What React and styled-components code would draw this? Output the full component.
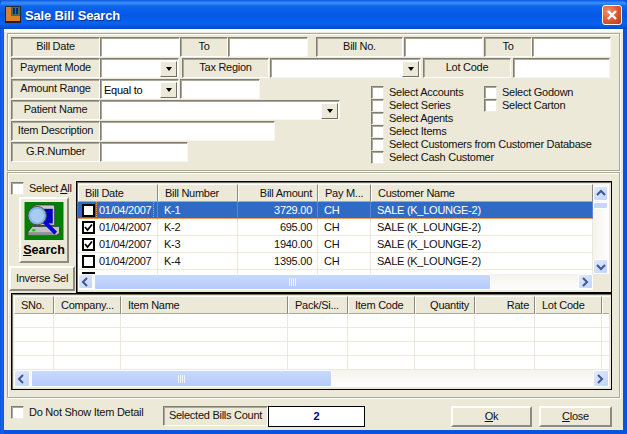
import React from "react";
import styled, { createGlobalStyle } from "styled-components";

const GlobalStyle = createGlobalStyle`
  html, body { margin: 0; padding: 0; background: #0a4fd8; }
  body { font-family: "Liberation Sans", Arial, sans-serif; font-size: 11px; letter-spacing: -0.26px; color: #000; }
`;

const Window = styled.div`
  width: 627px;
  height: 434px;
  display: flex;
  flex-direction: column;
  overflow: hidden;
  background: linear-gradient(90deg, #0a52e0 0, #1a66ee 2px, #0a52e0 4px, #0a52e0 100%);
`;

const TitleBar = styled.div`
  height: 29px;
  flex: none;
  display: flex;
  align-items: center;
  padding: 0 5px;
  border-radius: 6px 6px 0 0;
  background: linear-gradient(180deg, #0a58e0 0, #3a92f8 3px, #0f64ec 6px, #0458e6 15px, #0a62ee 24px, #0348c8 29px);
`;

const TitleText = styled.div`
  flex: 1;
  margin-left: 4px;
  padding-top: 2px;
  color: #fff;
  font-size: 13px;
  font-weight: bold;
  letter-spacing: -0.15px;
  text-shadow: 1px 1px 0 #0a2f90;
`;

const CloseButton = styled.div`
  width: 20px;
  height: 20px;
  box-sizing: border-box;
  border: 1px solid #fff;
  border-radius: 3px;
  display: flex;
  align-items: center;
  justify-content: center;
  background: radial-gradient(circle at 30% 30%, #ee9070, #d8532a 60%, #b83c14);
`;

const Body = styled.div`
  flex: 1;
  margin: 0 4px 4px 4px;
  padding: 1px 3px 0 3px;
  border-top: 3px solid #fff;
  background: #ece9d8;
  display: flex;
  flex-direction: column;
  gap: 1px;
`;

const Panel = styled.div`
  box-sizing: border-box;
  border: 1px solid #aca899;
  box-shadow: inset 1px 1px 0 #fff, 1px 1px 0 #fff;
  padding: ${(p) => p.$pad};
  height: ${(p) => p.$h}px;
  flex: none;
`;

const Row = styled.div`
  display: flex;
  height: 20px;
  margin-bottom: 1px;
`;

const Label = styled.div`
  box-sizing: border-box;
  width: ${(p) => p.$w}px;
  margin-left: ${(p) => p.$ml || 0}px;
  height: 20px;
  line-height: 16px;
  text-align: center;
  white-space: nowrap;
  overflow: hidden;
  border: 1px solid;
  border-color: #807d72 #fff #fff #807d72;
  box-shadow: inset 1px 1px 0 #aca899;
  background: #ece9d8;
  color: #111;
`;

const Field = styled.div`
  box-sizing: border-box;
  width: ${(p) => p.$w}px;
  margin-left: ${(p) => p.$ml || 0}px;
  height: 20px;
  display: flex;
  align-items: center;
  justify-content: space-between;
  padding: 1px 1px 0 3px;
  background: #fff;
  border: 1px solid;
  border-color: #807d72 #f8f7f0 #f8f7f0 #807d72;
  box-shadow: inset 1px 1px 0 #aca899;
`;

const DropButton = styled.div`
  box-sizing: border-box;
  width: 17px;
  height: 16px;
  background: #ece9d8;
  border: 1px solid;
  border-color: #fff #716f64 #716f64 #fff;
  display: flex;
  align-items: center;
  justify-content: center;
  &::after {
    content: "";
    border: 3px solid transparent;
    border-top: 4px solid #000;
    border-bottom: 0;
  }
`;

const LowerFilters = styled.div`
  display: flex;
`;

const FilterColumn = styled.div`
  width: 360px;
  flex: none;
`;

const CheckColumns = styled.div`
  display: flex;
  padding-top: 7px;
`;

const CheckList = styled.div`
  width: ${(p) => p.$w}px;
  display: flex;
  flex-direction: column;
`;

const CheckRow = styled.label`
  height: 13px;
  display: flex;
  align-items: center;
  gap: 5px;
  white-space: nowrap;
  color: #111;
  line-height: 13px;
`;

const Box = styled.span`
  box-sizing: border-box;
  width: 13px;
  height: 13px;
  flex: none;
  background: #fff;
  border: 1px solid;
  border-color: #807d72 #f0eee2 #f0eee2 #807d72;
  box-shadow: inset 1px 1px 0 #aca899;
`;

const ResultsTop = styled.div`
  display: flex;
`;

const SideColumn = styled.div`
  width: 66px;
  margin-right: 1px;
  flex: none;
  display: flex;
  flex-direction: column;
`;

const SelectAll = styled(CheckRow)`
  margin-left: 2px;
  height: 14px;
  margin-bottom: 2px;
`;

const SearchButton = styled.div`
  box-sizing: border-box;
  width: 50px;
  height: 66px;
  margin-left: 10px;
  padding-top: 3px;
  display: flex;
  flex-direction: column;
  align-items: center;
  background: #ece9d8;
  border: 2px solid;
  border-color: #fff #8d8b80 #8d8b80 #fff;
  font-weight: bold;
  font-size: 12.5px;
  letter-spacing: 0;
  line-height: 21px;
`;

const PushButton = styled.div`
  box-sizing: border-box;
  width: ${(p) => p.$w}px;
  height: ${(p) => p.$h || 20}px;
  margin-left: ${(p) => p.$ml || 0}px;
  margin-top: ${(p) => p.$mt || 0}px;
  padding-bottom: 1px;
  display: flex;
  align-items: center;
  justify-content: center;
  background: #ece9d8;
  border: 2px solid;
  border-color: #fff #8d8b80 #8d8b80 #fff;
  color: #111;
`;

const GridFrame = styled.div`
  box-sizing: border-box;
  width: ${(p) => p.$w}px;
  height: ${(p) => p.$h}px;
  margin-left: ${(p) => p.$ml || 0}px;
  padding: 2px 2px 2px ${(p) => p.$pl}px;
  border: 1px solid #000;
  box-shadow: inset 1px 1px 0 #716f64;
  background: #ece9d8;
  display: grid;
  grid-template-columns: ${(p) => p.$cols};
  grid-template-rows: ${(p) => p.$rows};
`;

const GridTable = styled.div`
  overflow: hidden;
  background: #fff;
  min-width: 0;
  min-height: 0;
`;

const GridRow = styled.div`
  display: flex;
  height: ${(p) => p.$h}px;
  background: ${(p) => (p.$sel ? "#316ac5" : "#fff")};
  color: ${(p) => (p.$sel ? "#fff" : "#111")};
`;

const HeadCell = styled.div`
  box-sizing: border-box;
  flex: none;
  width: ${(p) => p.$w}px;
  height: 18px;
  padding: 0 ${(p) => (p.$right ? 5 : 6)}px;
  line-height: 17px;
  text-align: ${(p) => (p.$right ? "right" : "left")};
  white-space: nowrap;
  overflow: hidden;
  background: #ece9d8;
  border: 1px solid;
  border-color: #fff #8d8b80 #aca899 #fff;
`;

const Cell = styled.div`
  box-sizing: border-box;
  flex: none;
  display: flex;
  align-items: center;
  justify-content: ${(p) => (p.$right ? "flex-end" : "flex-start")};
  width: ${(p) => p.$w}px;
  height: 100%;
  padding: 0 5px 0 6px;
  white-space: nowrap;
  border-right: 1px solid #ece9d8;
  border-bottom: 1px solid ${(p) => (p.$sel ? "#e8a05a" : "#ece9d8")};
  ${(p) => p.$sel && "border-right-color: #5f86d0;"}
`;

const DateCell = styled(Cell)`
  padding: 0 0 0 4px;
  gap: 4px;
`;

const DateText = styled.span`
  outline: ${(p) => (p.$sel ? "1px dotted #f0a050" : "none")};
  outline-offset: 2px;
`;

const TickBox = styled.span`
  box-sizing: border-box;
  width: 13px;
  height: 13px;
  flex: none;
  background: #fff;
  border: 2px solid #000;
  display: flex;
  align-items: center;
  justify-content: center;
`;

const VScroll = styled.div`
  display: flex;
  flex-direction: column;
  justify-content: space-between;
  background: linear-gradient(90deg, #f4f3ec, #fefefe);
  position: relative;
  padding-top: 2px;
`;

const VThumb = styled.div`
  position: absolute;
  left: 0;
  top: 18px;
  width: 15px;
  height: 7px;
  box-sizing: border-box;
  border: 1px solid #fff;
  border-radius: 2px;
  background: #c6d6fb;
`;

const HScroll = styled.div`
  grid-column: 1;
  display: flex;
  align-items: stretch;
  background: linear-gradient(180deg, #f4f3ec, #fefefe);
`;

const ScrollBtn = styled.div`
  box-sizing: border-box;
  flex: none;
  width: ${(p) => p.$w || 15}px;
  height: ${(p) => p.$h || 15}px;
  display: flex;
  align-items: center;
  justify-content: center;
  border: 1px solid #fff;
  border-radius: 2px;
  background: linear-gradient(135deg, #e1eafe, #c1d2fb);
`;

const HThumb = styled.div`
  box-sizing: border-box;
  width: ${(p) => p.$w}px;
  margin-left: 1px;
  display: flex;
  align-items: center;
  justify-content: center;
  border: 1px solid #fff;
  border-radius: 2px;
  background: linear-gradient(180deg, #c8d9fd, #b5cbfb);
`;

const Track = styled.div`
  flex: 1;
`;

const Footer = styled.div`
  flex: 1;
  display: flex;
  align-items: flex-start;
  padding: 7px 0 0 4px;
`;

const FooterCheck = styled(CheckRow)`
  width: 152px;
`;

const CountValue = styled.div`
  box-sizing: border-box;
  width: 97px;
  height: 21px;
  line-height: 19px;
  text-align: center;
  font-weight: bold;
  color: #00007f;
  background: #fff;
  border: 1px solid #000;
`;

const Mnemonic = styled.u`
  text-underline-offset: 1px;
`;

const AppIcon = () => (
  <svg width="16" height="17" viewBox="0 0 16 17">
    <rect x="0" y="0" width="16" height="16" fill="#1a2a3a" />
    <rect x="1" y="1" width="14" height="14" fill="#3e6f5c" />
    <path d="M1 1h5v9h9v5H1z" fill="#d9822b" />
    <path d="M9 2v6M12 2v6" stroke="#0a2a6a" strokeWidth="2" />
    <rect x="0" y="15" width="16" height="2" fill="#222" />
  </svg>
);

const SearchIcon = () => (
  <svg width="40" height="39" viewBox="0 0 40 39">
    <rect width="40" height="39" fill="#008000" />
    <path d="M8 5l4-2h18l1 2v19H11V8z" fill="#c8c8c8" stroke="#404040" />
    <rect x="17" y="7" width="12" height="15" fill="#0000c0" />
    <path d="M4 30l4-5h28v7l-3 2H4z" fill="#c0c0c0" stroke="#404040" />
    <rect x="8" y="28" width="3" height="2" fill="#00c000" />
    <path d="M4 31h28v3H4z" fill="#909090" />
    <path d="M20 20l12 12" stroke="#0000e0" strokeWidth="4" />
    <circle cx="13" cy="14" r="9.5" fill="#7fb4ee" stroke="#505050" />
    <circle cx="13" cy="14" r="7" fill="#a8ccf2" />
  </svg>
);

const Chevron = ({ dir }) => {
  const d = {
    left: "M6 1L2 5l4 4",
    right: "M2 1l4 4-4 4",
    up: "M1 6l4-4 4 4",
    down: "M1 3l4 4 4-4",
  }[dir];
  return (
    <svg width="10" height="10" viewBox="0 0 10 10">
      <path d={d} fill="none" stroke="#3e5a8c" strokeWidth="2" />
    </svg>
  );
};

const Grip = () => (
  <svg width="8" height="8" viewBox="0 0 8 8">
    <path d="M.5 0v8M2.5 0v8M4.5 0v8M6.5 0v8" stroke="#eef3ff" />
  </svg>
);

const Tick = () => (
  <svg width="9" height="9" viewBox="0 0 9 9">
    <path d="M1 4l2.5 3L8 1.5" fill="none" stroke="#000" strokeWidth="1.8" />
  </svg>
);

const billCols = [
  { name: "Bill Date", w: 80 },
  { name: "Bill Number", w: 80 },
  { name: "Bill Amount", w: 80, right: true },
  { name: "Pay M...", w: 53 },
  { name: "Customer Name", w: 222 },
];

const bills = [
  { no: "K-1", amount: "3729.00", checked: false },
  { no: "K-2", amount: "695.00", checked: true },
  { no: "K-3", amount: "1940.00", checked: true },
  { no: "K-4", amount: "1395.00", checked: false },
  { no: "K-5", amount: "747.00", checked: true },
];

const itemCols = [
  { name: "SNo.", w: 40 },
  { name: "Company...", w: 67 },
  { name: "Item Name", w: 167 },
  { name: "Pack/Si...", w: 60 },
  { name: "Item Code", w: 67 },
  { name: "Quantity", w: 60, right: true },
  { name: "Rate", w: 60, right: true },
  { name: "Lot Code", w: 67 },
  { name: "", w: 10 },
];

const leftChecks = [
  "Select Accounts",
  "Select Series",
  "Select Agents",
  "Select Items",
  "Select Customers from Customer Database",
  "Select Cash Customer",
];

const App = () => (
  <Window>
    <GlobalStyle />
    <TitleBar>
      <AppIcon />
      <TitleText>Sale Bill Search</TitleText>
      <CloseButton>
        <svg width="12" height="12" viewBox="0 0 12 12">
          <path d="M2 2l8 8M10 2l-8 8" stroke="#fff" strokeWidth="2.4" />
        </svg>
      </CloseButton>
    </TitleBar>
    <Body>
      <Panel $h={138} $pad="3px 0 0 3px">
        <Row>
          <Label $w={89}>Bill Date</Label>
          <Field $w={80} />
          <Label $w={48}>To</Label>
          <Field $w={80} />
          <Label $w={87} $ml={8}>Bill No.</Label>
          <Field $w={79} $ml={1} />
          <Label $w={48} $ml={1}>To</Label>
          <Field $w={79} />
        </Row>
        <Row>
          <Label $w={89}>Payment Mode</Label>
          <Field $w={79}><span /><DropButton /></Field>
          <Label $w={87} $ml={3}>Tax Region</Label>
          <Field $w={151} $ml={1}><span /><DropButton /></Field>
          <Label $w={88} $ml={2}>Lot Code</Label>
          <Field $w={97} $ml={2} />
        </Row>
        <LowerFilters>
          <FilterColumn>
            <Row>
              <Label $w={89}>Amount Range</Label>
              <Field $w={79}>Equal to<DropButton /></Field>
              <Field $w={80} $ml={1} />
            </Row>
            <Row>
              <Label $w={89}>Patient Name</Label>
              <Field $w={240}><span /><DropButton /></Field>
            </Row>
            <Row>
              <Label $w={89}>Item Description</Label>
              <Field $w={175} />
            </Row>
            <Row>
              <Label $w={89}>G.R.Number</Label>
              <Field $w={88} />
            </Row>
          </FilterColumn>
          <CheckColumns>
            <CheckList $w={113}>
              {leftChecks.map((text) => (
                <CheckRow key={text}><Box />{text}</CheckRow>
              ))}
            </CheckList>
            <CheckList $w={100}>
              <CheckRow><Box />Select Godown</CheckRow>
              <CheckRow><Box />Select Carton</CheckRow>
            </CheckList>
          </CheckColumns>
        </LowerFilters>
      </Panel>
      <Panel $h={226} $pad="8px 0 0 1px">
        <ResultsTop>
          <SideColumn>
            <SelectAll>
              <Box />
              <span>Select <Mnemonic>A</Mnemonic>ll</span>
            </SelectAll>
            <SearchButton>
              <SearchIcon />
              <span><Mnemonic>S</Mnemonic>earch</span>
            </SearchButton>
            <PushButton $w={66} $h={25} $mt={3}>Inverse Sel</PushButton>
          </SideColumn>
          <GridFrame $w={536} $h={112} $pl={1} $cols="1fr 16px" $rows="1fr 16px">
            <GridTable>
              <GridRow $h={18}>
                {billCols.map((c) => (
                  <HeadCell key={c.name} $w={c.w} $right={c.right}>{c.name}</HeadCell>
                ))}
              </GridRow>
              {bills.map((b, i) => {
                const sel = i === 0;
                return (
                  <GridRow key={b.no} $h={17} $sel={sel}>
                    <DateCell $w={80} $sel={sel}>
                      <TickBox>{b.checked && <Tick />}</TickBox>
                      <DateText $sel={sel}>01/04/2007</DateText>
                    </DateCell>
                    <Cell $w={80} $sel={sel}>{b.no}</Cell>
                    <Cell $w={80} $right $sel={sel}>{b.amount}</Cell>
                    <Cell $w={53} $sel={sel}>CH</Cell>
                    <Cell $w={222} $sel={sel}>SALE (K_LOUNGE-2)</Cell>
                  </GridRow>
                );
              })}
            </GridTable>
            <VScroll>
              <ScrollBtn $h={15}><Chevron dir="up" /></ScrollBtn>
              <VThumb />
              <ScrollBtn $h={15}><Chevron dir="down" /></ScrollBtn>
            </VScroll>
            <HScroll>
              <ScrollBtn><Chevron dir="left" /></ScrollBtn>
              <HThumb $w={397}><Grip /></HThumb>
              <Track />
              <ScrollBtn><Chevron dir="right" /></ScrollBtn>
            </HScroll>
          </GridFrame>
        </ResultsTop>
        <GridFrame $w={601} $h={97} $ml={2} $pl={2} $cols="1fr" $rows="1fr 17px">
          <GridTable>
            <GridRow $h={18}>
              {itemCols.map((c) => (
                <HeadCell key={c.name} $w={c.w} $right={c.right}>{c.name}</HeadCell>
              ))}
            </GridRow>
            {[0, 1, 2, 3].map((r) => (
              <GridRow key={r} $h={14}>
                {itemCols.map((c) => (
                  <Cell key={c.name} $w={c.w} />
                ))}
              </GridRow>
            ))}
          </GridTable>
          <HScroll>
            <ScrollBtn $w={16} $h={17}><Chevron dir="left" /></ScrollBtn>
            <HThumb $w={301}><Grip /></HThumb>
            <Track />
            <ScrollBtn $w={16} $h={17}><Chevron dir="right" /></ScrollBtn>
          </HScroll>
        </GridFrame>
      </Panel>
      <Footer>
        <FooterCheck><Box />Do Not Show Item Detail</FooterCheck>
        <Label $w={105}>Selected Bills Count</Label>
        <CountValue>2</CountValue>
        <PushButton $w={81} $h={21} $ml={86}><span><Mnemonic>O</Mnemonic>k</span></PushButton>
        <PushButton $w={73} $h={21} $ml={7}><span><Mnemonic>C</Mnemonic>lose</span></PushButton>
      </Footer>
    </Body>
  </Window>
);

export default App;
